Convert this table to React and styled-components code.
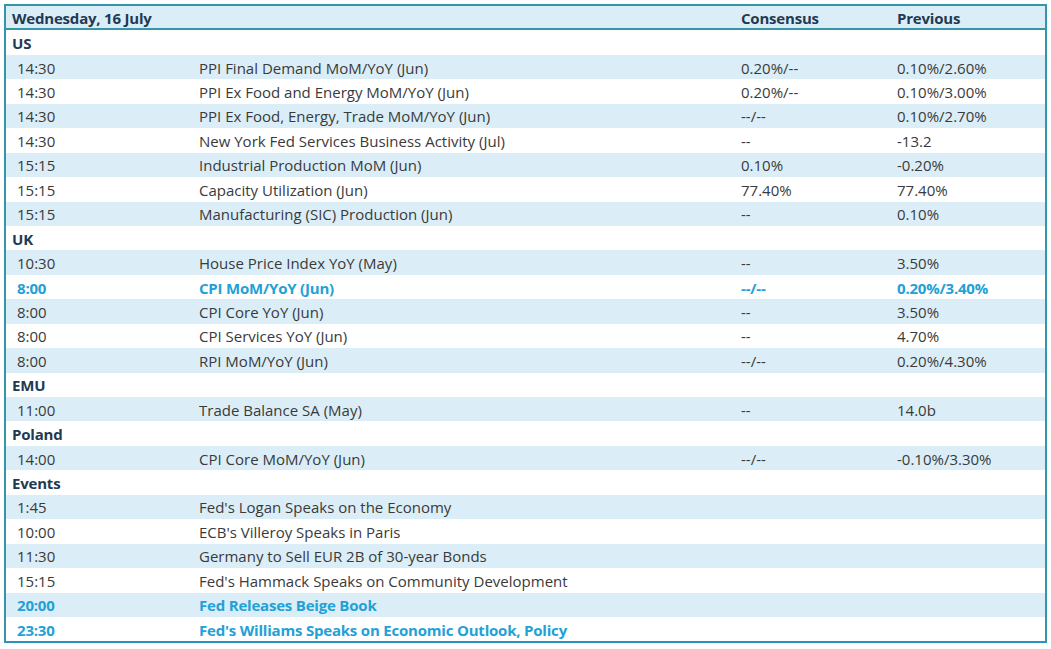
import React from "react";
import styled, { createGlobalStyle } from "styled-components";

const GlobalStyle = createGlobalStyle`
  html, body {
    margin: 0;
    padding: 0;
    background: #ffffff;
  }
  body {
    font-family: "Open Sans", "Liberation Sans", sans-serif;
  }
`;

const sections = [
  {
    name: "US",
    rows: [
      ["14:30", "PPI Final Demand MoM/YoY (Jun)", "0.20%/--", "0.10%/2.60%"],
      ["14:30", "PPI Ex Food and Energy MoM/YoY (Jun)", "0.20%/--", "0.10%/3.00%"],
      ["14:30", "PPI Ex Food, Energy, Trade MoM/YoY (Jun)", "--/--", "0.10%/2.70%"],
      ["14:30", "New York Fed Services Business Activity (Jul)", "--", "-13.2"],
      ["15:15", "Industrial Production MoM (Jun)", "0.10%", "-0.20%"],
      ["15:15", "Capacity Utilization (Jun)", "77.40%", "77.40%"],
      ["15:15", "Manufacturing (SIC) Production (Jun)", "--", "0.10%"],
    ],
  },
  {
    name: "UK",
    rows: [
      ["10:30", "House Price Index YoY (May)", "--", "3.50%"],
      ["8:00", "CPI MoM/YoY (Jun)", "--/--", "0.20%/3.40%", true],
      ["8:00", "CPI Core YoY (Jun)", "--", "3.50%"],
      ["8:00", "CPI Services YoY (Jun)", "--", "4.70%"],
      ["8:00", "RPI MoM/YoY (Jun)", "--/--", "0.20%/4.30%"],
    ],
  },
  {
    name: "EMU",
    rows: [["11:00", "Trade Balance SA (May)", "--", "14.0b"]],
  },
  {
    name: "Poland",
    rows: [["14:00", "CPI Core MoM/YoY (Jun)", "--/--", "-0.10%/3.30%"]],
  },
  {
    name: "Events",
    rows: [
      ["1:45", "Fed's Logan Speaks on the Economy", "", ""],
      ["10:00", "ECB's Villeroy Speaks in Paris", "", ""],
      ["11:30", "Germany to Sell EUR 2B of 30-year Bonds", "", ""],
      ["15:15", "Fed's Hammack Speaks on Community Development", "", ""],
      ["20:00", "Fed Releases Beige Book", "", "", true],
      ["23:30", "Fed's Williams Speaks on Economic Outlook, Policy", "", "", true],
    ],
  },
];

const Page = styled.div`
  padding: 4px;
`;

const Table = styled.div`
  width: 1043px;
  box-sizing: border-box;
  border: 2px solid #3596a8;
  border-bottom-color: #2b93bf;
`;

const Row = styled.div`
  display: grid;
  grid-template-columns: 187px 542px 156px 1fr;
  height: 24.45px;
  align-items: center;
  background: ${(p) => (p.$striped ? "#dbeef8" : "#ffffff")};
  font-size: 15px;
  color: ${(p) => (p.$hot ? "#22a1d6" : "#3a3a3a")};
  font-weight: ${(p) => (p.$hot ? 700 : 400)};
`;

const HeaderRow = styled(Row)`
  color: #1f3a52;
  font-weight: 700;
  box-sizing: border-box;
  border-bottom: 2px solid #3596a8;
`;

const SectionRow = styled(Row)`
  color: #1f3a52;
  font-weight: 700;
`;

const Cell = styled.div`
  padding-left: ${(p) => (p.$indent ? 11 : 6)}px;
  padding-top: 2px;
  white-space: nowrap;
  line-height: 1;
  letter-spacing: ${(p) => (p.$bold ? "-0.2px" : "0")};
`;

export default function App() {
  let idx = 0;
  const next = () => idx++ % 2 === 0;

  return (
    <Page>
      <GlobalStyle />
      <Table>
        <HeaderRow $striped={next()}>
          <Cell $bold>Wednesday, 16 July</Cell>
          <Cell />
          <Cell $bold>Consensus</Cell>
          <Cell $bold>Previous</Cell>
        </HeaderRow>
        {sections.map((s) => (
          <React.Fragment key={s.name}>
            <SectionRow $striped={next()}>
              <Cell $bold>{s.name}</Cell>
            </SectionRow>
            {s.rows.map((r, i) => (
              <Row key={i} $striped={next()} $hot={r[4]}>
                <Cell $indent $bold={r[4]}>{r[0]}</Cell>
                <Cell $bold={r[4]}>{r[1]}</Cell>
                <Cell $bold={r[4]}>{r[2]}</Cell>
                <Cell $bold={r[4]}>{r[3]}</Cell>
              </Row>
            ))}
          </React.Fragment>
        ))}
      </Table>
    </Page>
  );
}
